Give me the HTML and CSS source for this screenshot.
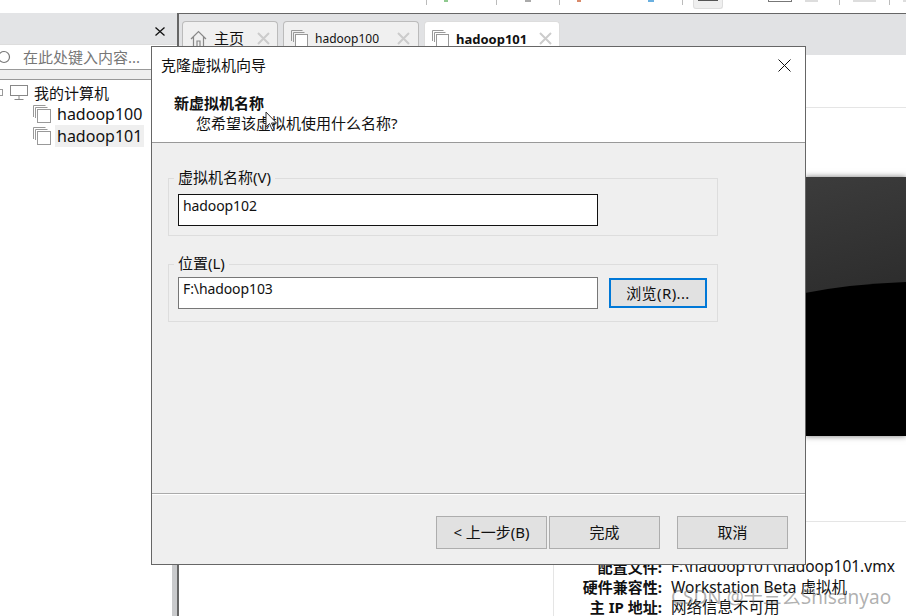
FILE: index.html
```html
<!DOCTYPE html>
<html lang="zh">
<head>
<meta charset="utf-8">
<title>克隆虚拟机向导</title>
<link rel="stylesheet" href="styles.css">
</head>
<body>
<div class="app">
  <header class="toolbar">
    <i class="sep m426"></i><i class="dot green"></i>
    <i class="sep m494"></i><i class="dot gray"></i>
    <i class="sep m544"></i><i class="dot red"></i><i class="dot blue"></i>
    <i class="sep m666"></i><i class="tool-btn"><b></b></i>
    <i class="frag"></i><i class="light l789"></i>
    <i class="sep m824"></i><i class="light l838"></i>
    <i class="sep m874"></i><i class="light l888"></i>
  </header>
  <div class="main">
    <aside class="library">
      <div class="lib-head">
        <svg width="10" height="9" viewBox="0 0 10 9"><path d="M.5.500l9 8M9.500.500l-9 8" stroke="#111" stroke-width="1.300" fill="none"/></svg>
      </div>
      <div class="search">
        <svg class="search-ic" width="12" height="14" viewBox="0 0 12 14"><circle cx="4" cy="7" r="5.500" fill="none" stroke="#777" stroke-width="1.200"/></svg>
        <span class="search-text">在此处键入内容...</span>
      </div>
      <div class="lib-strip"></div>
      <div class="tree">
        <div class="node root">
          <i class="expander"></i>
          <svg class="pc" width="18" height="15" viewBox="0 0 18 15"><rect x=".5" y=".5" width="17" height="10" fill="none" stroke="#888"/><path d="M9 11v3M4.500 14.500h9" stroke="#888" fill="none"/></svg>
          <span>我的计算机</span>
        </div>
        <div class="node vm">
          <svg class="vmic" width="18" height="18" viewBox="0 0 18 18"><path d="M.5 12V.5h12" fill="none" stroke="#999"/><path d="M2.500 13V2.500h12" fill="none" stroke="#999"/><rect x="4.500" y="4.500" width="13" height="13" fill="#fff" stroke="#999"/></svg>
          <span class="vm-name">hadoop100</span>
        </div>
        <div class="node vm">
          <svg class="vmic" width="18" height="18" viewBox="0 0 18 18"><path d="M.5 12V.5h12" fill="none" stroke="#999"/><path d="M2.500 13V2.500h12" fill="none" stroke="#999"/><rect x="4.500" y="4.500" width="13" height="13" fill="#fff" stroke="#999"/></svg>
          <span class="vm-name sel">hadoop101</span>
        </div>
      </div>
    </aside>
    <section class="work">
      <div class="tabs">
        <div class="tab home">
          <svg width="17" height="18" viewBox="0 0 17 18"><path d="M1 9 8.500 1.500 16 9M3.500 7v10h3.500v-6h3v6h3.500V7" fill="none" stroke="#888" stroke-width="1.200"/></svg>
          <span class="tab-label cn">主页</span>
          <svg class="tab-x" width="13" height="13" viewBox="0 0 13 13"><path d="M1 1l11 11M12 1L1 12" stroke="#ccc" stroke-width="2" fill="none"/></svg>
        </div>
        <div class="tab t100">
          <svg width="17" height="18" viewBox="0 0 17 18"><path d="M.5 11V.5h11" fill="none" stroke="#999"/><path d="M2.500 12V2.500h11" fill="none" stroke="#999"/><rect x="4.500" y="4.500" width="12" height="13" fill="#fff" stroke="#999"/></svg>
          <span class="tab-label">hadoop100</span>
          <svg class="tab-x" width="13" height="13" viewBox="0 0 13 13"><path d="M1 1l11 11M12 1L1 12" stroke="#ccc" stroke-width="2" fill="none"/></svg>
        </div>
        <div class="tab t101">
          <svg width="17" height="18" viewBox="0 0 17 18"><path d="M.5 11V.5h11" fill="none" stroke="#999"/><path d="M2.500 12V2.500h11" fill="none" stroke="#999"/><rect x="4.500" y="4.500" width="12" height="13" fill="#fff" stroke="#999"/></svg>
          <span class="tab-label strong">hadoop101</span>
          <svg class="tab-x" width="13" height="13" viewBox="0 0 13 13"><path d="M1 1l11 11M12 1L1 12" stroke="#ccc" stroke-width="2" fill="none"/></svg>
        </div>
      </div>
      <div class="content">
        <div class="title-rule"></div>
        <div class="screen">
          <svg class="arc" width="101" height="259" viewBox="0 0 101 259"><path d="M0 116Q45 107 101 105V259H0Z" fill="#000"/></svg>
        </div>
        <div class="details">
          <div class="row"><b>配置文件:</b><span>F:\hadoop101\hadoop101.vmx</span></div>
          <div class="row"><b>硬件兼容性:</b><span>Workstation Beta 虚拟机</span></div>
          <div class="row"><b>主 IP 地址:</b><span>网络信息不可用</span></div>
        </div>
      </div>
    </section>
  </div>
</div>

<div class="watermark">CSDN @十三么Shisanyao</div>

<div class="dialog">
  <div class="dlg-head">
    <div class="dlg-title">克隆虚拟机向导</div>
    <svg class="dlg-close" width="13" height="13" viewBox="0 0 13 13"><path d="M.5.500l12 12M12.500.500l-12 12" stroke="#111" fill="none"/></svg>
    <div class="dlg-h">新虚拟机名称</div>
    <div class="dlg-sub">您希望该虚拟机使用什么名称?</div>
    <svg class="cursor" width="13" height="20" viewBox="0 0 13 20"><path d="M1 1v15l3.500-3.500 2.500 6 2-1-2.500-5.500H11.500z" fill="#fff" stroke="#333"/></svg>
  </div>
  <div class="dlg-body">
    <fieldset class="group g1">
      <legend>虚拟机名称(V)</legend>
      <div class="input focus">hadoop102</div>
    </fieldset>
    <fieldset class="group g2">
      <legend>位置(L)</legend>
      <div class="input">F:\hadoop103</div>
      <div class="btn browse">浏览(R)...</div>
    </fieldset>
  </div>
  <div class="dlg-foot">
    <div class="btn">&lt; 上一步(B)</div>
    <div class="btn">完成</div>
    <div class="btn cancel">取消</div>
  </div>
</div>
</body>
</html>
```
FILE: styles.css
```css
* { box-sizing: border-box; }
html, body { margin: 0; padding: 0; }
body {
  width: 906px; height: 616px; overflow: hidden; position: relative; background: #fff;
  font-family: "Noto Sans", "Noto Sans CJK SC", sans-serif; font-size: 15px; color: #111;
}
.app { width: 906px; height: 616px; display: flex; flex-direction: column; }

.toolbar { height: 13px; background: #fff; flex: none; display: flex; align-items: flex-start; }
.sep { width: 1px; height: 5px; background: #bbb; flex: none; }
.m426 { margin-left: 426px; }
.m494 { margin-left: 48px; }
.m544 { margin-left: 28px; }
.m666 { margin-left: 28px; }
.m824 { margin-left: 21px; }
.m874 { margin-left: 13px; }
.dot { width: 4px; height: 2px; flex: none; }
.green { background: #8fc98f; margin-left: 17px; }
.gray { background: #aaa; margin-left: 28px; width: 6px; }
.red { background: #d98a6a; margin-left: 17px; }
.blue { background: #6ab0e0; margin-left: 67px; width: 6px; }
.tool-btn { width: 30px; height: 9px; margin-left: 10px; background: #efefef; border: 1px solid #ddd; border-top: 0; border-radius: 0 0 3px 3px; display: flex; justify-content: center; flex: none; }
.tool-btn b { width: 20px; height: 1px; background: #555; }
.frag { width: 24px; height: 2px; margin-left: 45px; border: 1px solid #777; border-top: 0; flex: none; }
.light { height: 2px; background: #ddd; flex: none; }
.l789 { width: 13px; margin-left: 13px; }
.l838 { width: 23px; margin-left: 13px; }
.l888 { width: 18px; margin-left: 13px; }

.main { flex: 1; display: flex; min-height: 0; }
.library { width: 177px; flex: none; display: flex; flex-direction: column; }
.lib-head { height: 31px; background: #e3e4e6; display: flex; justify-content: flex-end; align-items: center; padding: 6px 12px 0 0; flex: none; }
.search { height: 26px; display: flex; align-items: center; gap: 11px; border-top: 1px solid #ddd; border-bottom: 1px solid #999; flex: none; }
.search-ic { flex: none; }
.search-text { color: #777; font-size: 15px; line-height: 20px; white-space: nowrap; }
.lib-strip { height: 10px; background: #efefef; border-bottom: 1px solid #999; flex: none; }
.tree { flex: 1; background: #fff; padding-top: 1px; border-right: 5px solid #c9cacc; }
.node { display: flex; align-items: center; }
.expander { width: 3px; height: 7px; border: 1px solid #999; border-left: 0; margin-right: 1px; }
.root { height: 22px; gap: 6px; font-size: 15px; }
.vm { height: 22px; padding-left: 33px; gap: 4px; font-size: 16px; }
.vm-name { padding: 0 2px; line-height: 22px; }
.sel { background: #efefef; }

.work { flex: 1; display: flex; flex-direction: column; border-left: 2px solid #666; border-top: 1px solid #666; background: #fff; min-width: 0; }
.tabs { height: 41px; background: #e1e2e4; display: flex; align-items: flex-end; padding-left: 3px; gap: 5px; flex: none; }
.tab { height: 34px; background: #f0f0f0; border: 1px solid #bbb; border-bottom: 0; border-radius: 4px 4px 0 0; display: flex; align-items: center; padding: 0 7px; gap: 7px; }
.home { width: 96px; }
.t100, .t101 { width: 136px; }
.t100 { padding-right: 8px; }
.t101 { background: #fff; border-color: #ddd; }
.tab-label { font-size: 12px; flex: 1; }
.tab-label.cn { font-size: 15px; margin-bottom: 3px; }
.tab-label.strong { font-weight: bold; font-size: 13px; }
.tab-x { flex: none; }

.content { flex: 1; display: flex; flex-direction: column; min-height: 0; }
.title-rule { height: 53px; border-bottom: 1px solid #e5e5e5; flex: none; }
.screen { margin-left: 626px; margin-top: 69px; flex: none; height: 259px; background: linear-gradient(165deg, #3c3c3c, #1c1c1c); box-shadow: 0 0 6px rgba(0,0,0,.55); display: flex; }
.arc { display: block; }
.details { margin-top: 85px; margin-left: 374px; border-top: 1px solid #e5e5e5; border-left: 1px solid #e5e5e5; padding-top: 34px; flex: 1; }
.row { display: flex; height: 20.250px; align-items: center; font-size: 15px; gap: 9px; white-space: nowrap; }
.row b { width: 108px; text-align: right; flex: none; }
.row span { flex: none; font-size: 15.500px; }
.watermark { position: absolute; left: 671px; top: 585px; font-size: 19px; line-height: 24px; color: rgba(110,110,110,.55); white-space: nowrap; z-index: 1; }

.dialog { position: absolute; left: 151px; top: 46px; width: 655px; height: 519px; background: #efefef; border: 1px solid #666; display: flex; flex-direction: column; z-index: 2; }
.dlg-head { height: 96px; background: #fff; border-bottom: 1px solid #999; position: relative; flex: none; }
.dlg-title { position: absolute; left: 9px; top: 8px; line-height: 20px; }
.dlg-close { position: absolute; right: 14px; top: 12px; }
.dlg-h { position: absolute; left: 22px; top: 46px; font-weight: bold; line-height: 20px; }
.dlg-sub { position: absolute; left: 44px; top: 66px; line-height: 20px; }
.cursor { position: absolute; left: 113px; top: 64px; }
.dlg-body { flex: 1; padding: 0 16px; display: flex; flex-direction: column; border-bottom: 1px solid #aaa; box-shadow: 0 1px 0 #fff; }
.group { margin: 0; padding: 0; border: 1px solid #ddd; position: relative; min-width: 0; width: 550px; height: 58px; flex: none; }
.g1 { margin-top: 35px; }
.g2 { margin-top: 28px; }
legend { position: absolute; left: 5px; top: -12px; background: #efefef; padding: 0 4px; font-size: 15px; line-height: 20px; }
.input { position: absolute; left: 9px; top: 15px; width: 420px; height: 32px; background: #fff; border: 1px solid #777; padding: 0 4px; font-size: 14px; letter-spacing: -.1px; line-height: 22px; }
.g2 .input { top: 12px; }
.input.focus { border-color: #111; }
.btn { width: 111px; height: 33px; background: #e1e1e1; border: 1px solid #adadad; display: flex; align-items: center; justify-content: center; font-size: 15px; padding-bottom: 3px; flex: none; }
.browse { position: absolute; left: 440px; top: 13px; width: 98px; height: 30px; border: 2px solid #0078d7; padding-bottom: 2px; letter-spacing: .4px; }
.dlg-foot { height: 69px; flex: none; display: flex; padding: 21px 0 0 284px; gap: 2px; margin-top: 1px; }
.cancel { margin-left: 15px; }
```
